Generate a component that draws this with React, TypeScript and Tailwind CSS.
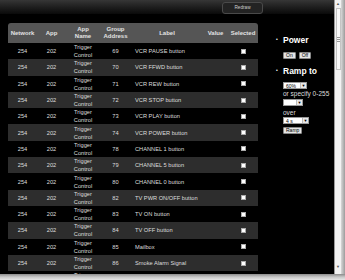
const rows = [
    { addr: '69', label: 'VCR PAUSE button' },
    { addr: '70', label: 'VCR FFWD button' },
    { addr: '71', label: 'VCR REW button' },
    { addr: '72', label: 'VCR STOP button' },
    { addr: '73', label: 'VCR PLAY button' },
    { addr: '74', label: 'VCR POWER button' },
    { addr: '78', label: 'CHANNEL 1 button' },
    { addr: '79', label: 'CHANNEL 5 button' },
    { addr: '80', label: 'CHANNEL 0 button' },
    { addr: '82', label: 'TV PWR ON/OFF button' },
    { addr: '83', label: 'TV ON button' },
    { addr: '84', label: 'TV OFF button' },
    { addr: '85', label: 'Mailbox' },
    { addr: '86', label: 'Smoke Alarm Signal' },
    { addr: '87', label: '' },
];

const cols = 'grid grid-cols-[29px_29px_34px_31px_72px_25px_30px]';

function Select({ value, width }: { value: string; width: string }) {
    return (
        <div className={`${width} h-[7px] bg-white border border-[#999] flex items-stretch`}>
            <span className="flex-1 text-[5px] leading-[6px] text-black pl-[2px]">{value}</span>
            <span className="w-[6px] border-l border-[#bbb] bg-[#e8e8e8] text-[4px] leading-[6px] text-center text-black">▼</span>
        </div>
    );
}

function SmallButton({ children }: { children: React.ReactNode }) {
    return (
        <span className="h-[7px] px-[2px] bg-[#e4e4e4] border border-[#888] rounded-[1px] text-[5px] leading-[5px] text-black flex items-center">
            {children}
        </span>
    );
}

export default function App() {
    return (
        <div className="w-[345px] h-[280px] overflow-hidden relative bg-black flex font-['Liberation_Sans',Arial,sans-serif]">
            <div className="flex-1 flex flex-col">
                {/* top bar */}
                <div className="h-[16px] bg-gradient-to-b from-[#363636] to-[#0a0a0a] flex justify-end pr-[71px]">
                    <button className="mt-[2px] h-[12px] w-[41px] bg-[#232323] border border-[#4a4a4a] rounded-[3px] text-[4.7px] text-[#ccc] flex items-center justify-center">
                        Redraw
                    </button>
                </div>

                <div className="flex pt-[9px]">
                    {/* table */}
                    <div className="ml-[8px] w-[250px] text-[5.7px] text-[#ddd]">
                        <div className={`${cols} h-[20px] bg-[#555] rounded-t-[3px] items-center text-center font-bold text-[6px] leading-[7px] text-[#e2e2e2]`}>
                            <span>Network</span>
                            <span>App</span>
                            <span>App<br />Name</span>
                            <span>Group<br />Address</span>
                            <span>Label</span>
                            <span>Value</span>
                            <span>Selected</span>
                        </div>
                        {rows.map((r, i) => (
                            <div
                                key={r.addr}
                                className={`${cols} h-[16.3px] items-center text-center leading-[8px] ${i % 2 === 1 ? 'bg-[#2d2d2d]' : 'bg-black'}`}
                            >
                                <span>254</span>
                                <span>202</span>
                                <span>Trigger<br />Control</span>
                                <span>{r.addr}</span>
                                <span className="text-left pl-[4px]">{r.label}</span>
                                <span></span>
                                <span className="flex justify-center">
                                    <span className="w-[5px] h-[5px] bg-white border border-[#aaa]"></span>
                                </span>
                            </div>
                        ))}
                    </div>

                    {/* controls */}
                    <div className="flex-1 pl-[18px] pt-[12px] text-white">
                        <div className="flex items-center h-[10px]">
                            <span className="w-[7px] text-[5px]">•</span>
                            <span className="font-bold text-[8.5px] leading-[10px]">Power</span>
                        </div>
                        <div className="flex gap-[3px] mt-[7px] ml-[7px]">
                            <SmallButton>On</SmallButton>
                            <SmallButton>Off</SmallButton>
                        </div>
                        <div className="flex items-center h-[10px] mt-[7px]">
                            <span className="w-[7px] text-[5px]">•</span>
                            <span className="font-bold text-[8.5px] leading-[10px]">Ramp to</span>
                        </div>
                        <div className="ml-[7px] mt-[6px] flex flex-col items-start text-[6.5px] leading-[8px] text-[#ddd]">
                            <Select value="60%" width="w-[24px]" />
                            <span className="mt-[1px] whitespace-nowrap">or specify 0-255</span>
                            <div className="mt-[1px]">
                                <Select value="" width="w-[20px]" />
                            </div>
                            <span className="mt-[3px]">over</span>
                            <Select value="4 s" width="w-[26px]" />
                            <div className="mt-[3px]">
                                <SmallButton>Ramp</SmallButton>
                            </div>
                        </div>
                    </div>
                </div>
            </div>

            {/* scrollbar */}
            <div className="w-[7px] bg-[#f2f2f2] border-l border-[#9a9a9a] flex flex-col items-center">
                <span className="text-[4px] leading-[7px] text-[#555]">▲</span>
                <div className="mt-[1px] w-[5px] h-[62px] bg-[#fafafa] border border-[#c4c4c4] flex flex-col items-center justify-center gap-[1px]">
                    <span className="w-[3px] h-px bg-[#999]"></span>
                    <span className="w-[3px] h-px bg-[#999]"></span>
                    <span className="w-[3px] h-px bg-[#999]"></span>
                </div>
                <div className="flex-1"></div>
                <span className="text-[4px] leading-[7px] text-[#555] mb-[10px]">▼</span>
            </div>
            <div className="w-[4px] bg-gradient-to-r from-[#d8d8d8] to-[#9c9c9c]"></div>

            {/* window frame bottom edge */}
            <div className="absolute left-0 right-0 bottom-0 h-[6px] bg-gradient-to-b from-[#8c8c8c] via-[#c8c8c8] to-[#e6e6e6]"></div>
        </div>
    );
}
